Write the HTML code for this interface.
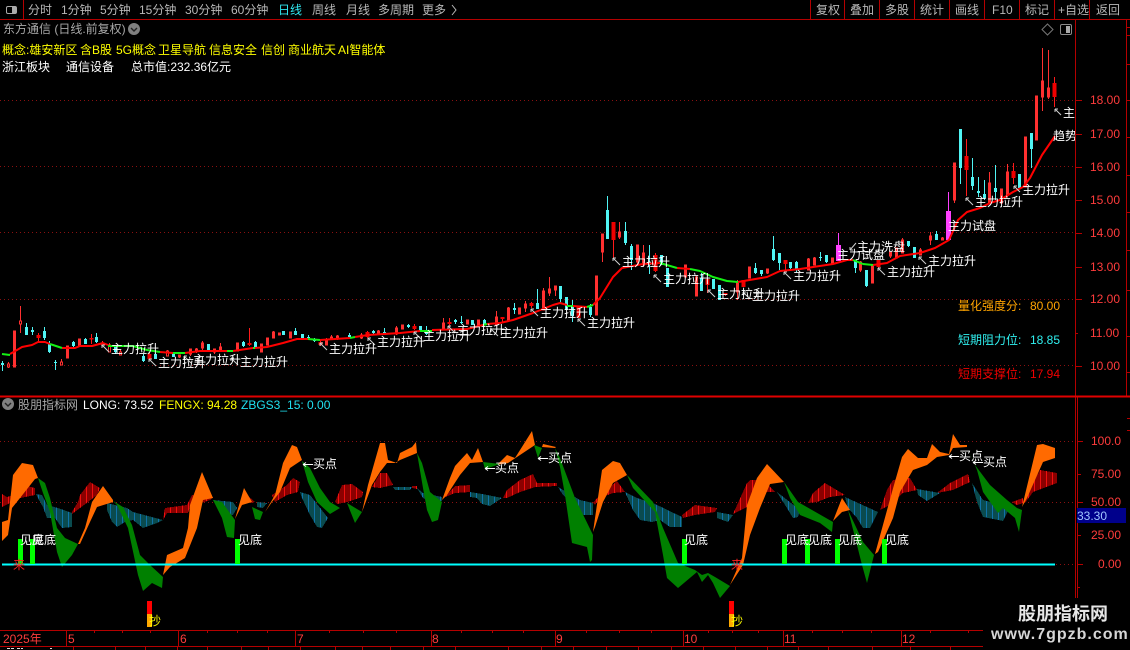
<!DOCTYPE html>
<html><head><meta charset="utf-8"><title>东方通信</title>
<style>
html,body{margin:0;padding:0;background:#000;width:1130px;height:650px;overflow:hidden}
svg{display:block}
text{font-family:"Liberation Sans","WenQuanYi Zen Hei","Noto Sans CJK SC",sans-serif;font-size:12px}
.g{fill:#b8b8b8}.ax{fill:#ff3c3c}.w{fill:#fff}.y{fill:#ffff00}
</style></head><body>
<svg width="1130" height="650" viewBox="0 0 1130 650" xmlns="http://www.w3.org/2000/svg">
<defs>
<pattern id="pr" width="6" height="10" patternUnits="userSpaceOnUse"><rect width="6" height="10" fill="#8b0000"/><rect x="2" width="1" height="10" fill="#ee1010"/></pattern>
<pattern id="pt" width="6" height="10" patternUnits="userSpaceOnUse"><rect width="6" height="10" fill="#0a4b4f"/><rect x="2" width="1" height="10" fill="#0f72a8"/></pattern>
<clipPath id="cl"><rect x="0" y="20" width="1075" height="376"/></clipPath>
</defs>
<rect width="1130" height="650" fill="#000"/>

<!-- main grid -->
<path d="M0 100.5H1075M0 166.5H1075M0 232.5H1075M0 299.5H1075M0 365.5H1075M0 441.5H1075M0 502.5H1075M1056 564.5H1075" stroke="#8a1010" stroke-width="1" stroke-dasharray="1 3" fill="none"/>

<!-- frame -->
<g stroke="#b40000" stroke-width="1" fill="none" shape-rendering="crispEdges">
<path d="M0 19.5H1130M23.5 0V19M810.5 0V19M844.5 0V19M879.5 0V19M914.5 0V19M949.5 0V19M984.5 0V19M1019.5 0V19M1054.5 0V19M1089.5 0V19"/>
<path d="M1075.5 19V650M1077.5 397V598M1126.5 19V396"/>
<path d="M0 630.5H1075M0 646.5H1075"/>
<path d="M66.5 630V646M178.5 630V646M295.5 630V646M431.5 630V646M555.5 630V646M683.5 630V646M783.5 630V646M901.5 630V646"/>
<path d="M94.5 630v3M122.5 630v3M150.5 630v3M207.5 630v3M237.5 630v3M267.5 630v3M329.5 630v3M363.5 630v3M396.5 630v3M461.5 630v3M492.5 630v3M523.5 630v3M586.5 630v3M619.5 630v3M651.5 630v3M708.5 630v3M732.5 630v3M758.5 630v3M812.5 630v3M842.5 630v3M871.5 630v3M930.5 630v3M968.5 630v3"/>
<path d="M73.5 646v4M115.5 646v4M145.5 646v4M177.5 646v4M207.5 646v4M241.5 646v4M268.5 646v4M300.5 646v4M335.5 646v4M362.5 646v4M390.5 646v4M423.5 646v4M455.5 646v4M508.5 646v4M541.5 646v4M573.5 646v4M606.5 646v4M638.5 646v4M671.5 646v4M703.5 646v4M735.5 646v4M767.5 646v4M798.5 646v4M828.5 646v4M872.5 646v4M910.5 646v4M950.5 646v4"/>
<path d="M1075 100.5h7M1075 134.5h7M1075 167.5h7M1075 200.5h7M1075 233.5h7M1075 267.5h7M1075 299.5h7M1075 333.5h3M1075 366.5h7M1077 441.5h6M1077 474.5h4M1077 502.5h6M1077 535.5h4M1077 564.5h6M1077 587.5h3"/>
<path d="M1126 27.5h4M1126 35.5h4M1126 64.5h4M1126 100.5h4M1126 137.5h4M1126 175.5h4M1126 212.5h4M1126 250.5h4M1126 290.5h4M1126 336.5h4M1126 372.5h4M1127 418.5h3M1127 430.5h3"/>
</g>
<path d="M0 396.5H1130" stroke="#e00000" stroke-width="2" shape-rendering="crispEdges"/>
<path d="M7 648.5h3M11 648.5h3M17 648.5h3M21 648.5h2M50 648.5h2" stroke="#ddd" shape-rendering="crispEdges"/>

<!-- candles: hollow red -->
<g shape-rendering="crispEdges" fill="none">
<path stroke="#ff3030" stroke-width="1" d="M8.5 362V364M8.5 367V368M7.5 364h2v3h-2zM14.5 331V367M13.5 331h2v36h-2zM20.5 306V321M20.5 324V333M19.5 321h2v3h-2zM61.5 359V362M60.5 362h2v3h-2zM67.5 346V358M66.5 346h2v12h-2zM79.5 339V346M78.5 339h2v7h-2zM102.5 341V343M101.5 343h2v2h-2zM109.5 343V345M108.5 345h2v7h-2zM120.5 350V352M119.5 352h2v3h-2zM167.5 350V351M166.5 351h2v5h-2zM179.5 355V358M178.5 355h2v2h-2zM190.5 349V356M189.5 349h2v5h-2zM196.5 348V353M195.5 349h2v2h-2zM202.5 341V350M201.5 343h2v5h-2zM214.5 349V354M213.5 349h2v3h-2zM220.5 343V352M219.5 347h2v3h-2zM237.5 343V351M236.5 343h2v8h-2zM261.5 344V352M260.5 344h2v8h-2zM267.5 338V345M266.5 338h2v7h-2zM273.5 331V338M272.5 332h2v6h-2zM279.5 333V335M278.5 333h2v2h-2zM290.5 332V338M289.5 332h2v6h-2zM326.5 338V345M325.5 340h2v5h-2zM331.5 335V340M330.5 337h2v2h-2zM337.5 335V340M336.5 336h2v2h-2zM361.5 333V339M360.5 335h2v3h-2zM378.5 330V335M377.5 331h2v3h-2zM396.5 326V335M395.5 328h2v6h-2zM402.5 325V329M401.5 325h2v4h-2zM443.5 318V330M442.5 323h2v7h-2zM467.5 320V324M466.5 320h2v4h-2zM478.5 320V325M477.5 320h2v5h-2zM496.5 311V325M495.5 317h2v8h-2zM508.5 307V322M507.5 308h2v13h-2zM519.5 308V314M518.5 308h2v6h-2zM525.5 301V312M524.5 304h2v4h-2zM543.5 288V310M542.5 291h2v19h-2zM549.5 277V296M548.5 289h2v4h-2zM555.5 286V296M554.5 286h2v4h-2zM596.5 276V315M595.5 276h2v39h-2zM602.5 234V262M601.5 234h2v18h-2zM619.5 222V239M618.5 232h2v5h-2zM643.5 245V265M642.5 253h2v12h-2zM637.5 245V265M636.5 245h2v17h-2zM685.5 265V277M684.5 265h2v12h-2zM696.5 276V296M695.5 277h2v19h-2zM737.5 280V300M736.5 283h2v9h-2zM749.5 267V278M748.5 267h2v11h-2zM767.5 269V274M766.5 269h2v4h-2zM808.5 258V270M807.5 259h2v11h-2zM814.5 257V265M813.5 258h2v7h-2zM872.5 266V283M871.5 266h2v17h-2zM832.5 258V264M831.5 258h2v6h-2zM860.5 261V272M859.5 262h2v8h-2zM890.5 252V258M889.5 252h2v4h-2zM896.5 248V258M895.5 248h2v10h-2zM902.5 238V253M901.5 240h2v13h-2zM920.5 248V255M919.5 250h2v5h-2zM930.5 232V245M929.5 236h2v4h-2zM942.5 237V240M941.5 238h2v2h-2zM954.5 163V203M953.5 163h2v37h-2zM989.5 172V203M988.5 183h2v20h-2zM1001.5 189V203M1000.5 189h2v14h-2zM1007.5 164V197M1006.5 172h2v23h-2zM1025.5 137V187M1024.5 137h2v50h-2zM1036.5 96V140M1035.5 96h2v44h-2zM1042.5 48V111M1041.5 81h2v16h-2zM1048.5 50V99M1047.5 88h2v9h-2z"/>
<!-- solid red -->
<path stroke="#ff1a1a" stroke-width="1" d="M38.5 333V342M91.5 334V344M149.5 353V359M320.5 340V346M367.5 331V338M414.5 324V330M449.5 318V327M502.5 317V322M531.5 302V308M578.5 306V318M613.5 222V258M655.5 253V272M707.5 278V293M725.5 293V296M743.5 280V287M785.5 260V271M878.5 260V268M249.5 328V346M966.5 139V196M1013.5 163V184M1054.5 77V107"/>
<path stroke="#f00000" stroke-width="4" d="M38.5 335V338M91.5 338V339.5M149.5 354V359M320.5 342V345M367.5 332V337M414.5 326V329M449.5 322V324M502.5 317V319M531.5 303V306M578.5 306V318M613.5 222V240M655.5 255V271M707.5 279V285M725.5 293V295M743.5 280V287M785.5 260V264M878.5 260V267M249.5 343V345M966.5 156V170M1013.5 171V178M1054.5 83V97"/>
<!-- cyan -->
<path stroke="#50f4f4" stroke-width="1" d="M2.5 361V371M26.5 323V335M32.5 327V335M44.5 327V340M49.5 341V353M55.5 360V370M73.5 341V347M85.5 338V344M96.5 333V343M115.5 345V354M143.5 354V362M155.5 353V359M173.5 353V357M208.5 344V350M243.5 341V347M255.5 341V348M283.5 331V335M295.5 328V335M302.5 334V339M308.5 335V340M314.5 338V342M349.5 333V338M373.5 330V334M384.5 328V334M408.5 324V328M420.5 326V332M426.5 326V335M455.5 319V324M461.5 316V324M472.5 320V325M484.5 319V324M514.5 303V314M537.5 289V309M560.5 286V303M566.5 297V310M572.5 300V322M590.5 304V317M607.5 196V239M625.5 222V245M631.5 244V270M649.5 245V274M661.5 255V265M667.5 268V287M701.5 273V291M713.5 279V289M719.5 285V300M755.5 263V274M761.5 270V276M773.5 236V261M779.5 253V270M790.5 262V270M796.5 261V272M820.5 252V261M826.5 255V263M855.5 260V273M866.5 270V287M908.5 241V247M914.5 247V258M936.5 231V240M960.5 129V184M972.5 158V190M978.5 177V197M984.5 180V200M995.5 165V200M1019.5 174V188M1031.5 133V168"/>
<path stroke="#50f4f4" stroke-width="3" d="M2.5 363V365M26.5 327V335M32.5 330V332M44.5 331V338M49.5 344V352M55.5 362V363M73.5 342V346M85.5 339V344M96.5 337V342M115.5 347V352M143.5 356V361M155.5 354V359M173.5 353V357M208.5 344V350M243.5 342V346M255.5 342V347M283.5 331V335M295.5 331V335M302.5 334V339M308.5 337V338M314.5 339V341M349.5 335V337M373.5 331V333M384.5 332V333M408.5 325V327M420.5 326V331M426.5 331V334M455.5 320V322M461.5 322V323M472.5 320V325M484.5 320V324M514.5 308V310M537.5 303V309M560.5 286V299M566.5 297V310M572.5 306V316M590.5 307V315M607.5 210V239M625.5 231V243M631.5 246V260M649.5 262V265M661.5 255V265M667.5 268V287M701.5 278V291M713.5 279V289M719.5 285V300M755.5 268V273M761.5 270V274M773.5 249V260M779.5 253V263M790.5 262V268M796.5 262V270M820.5 257V258M826.5 255V262M855.5 260V268M866.5 270V286M908.5 241V246M914.5 247V258M936.5 234V240M960.5 129V168M972.5 177V186M978.5 191V193M984.5 194V198M995.5 188V192M1019.5 174V188M1031.5 133V149"/>
<!-- magenta -->
<path stroke="#ff40ff" stroke-width="1" d="M838.5 233V245M948.5 192V211"/>
<path stroke="#ff40ff" stroke-width="5" d="M838.5 245V261M948.5 211V240"/>
</g>

<!-- MA line -->
<g fill="none" stroke-width="2" stroke-linejoin="round">
<path stroke="#ff0000" d="M10 354L17 350L22 347L32 345L38 342L45 342L50 344M62 348L75 348L80 346L92 346L103 343L108 345M160 352L173 353M185 353L200 351L227 351M233 351L253 348M255 348L267 347L283 343L297 339L308 339M320 340L350 338M355 337L368 335L400 333L420 331M432 330L467 329L483 325M487 324L500 323L513 320L533 313L553 305L560 303L567 305M573 306L587 307M593 305L600 298L613 277L622 268L643 264L660 263M677 268L690 269M738 282L767 277L780 271L800 269L833 264L847 260L853 260M873 265L887 263L900 256L920 253L935 248L949 240L958 220L967 212L980 208L990 203L1000 200L1013 192L1023 187L1030 178L1042 155L1055 136"/>
<path stroke="#14f014" d="M2 354L10 355M50 344L62 348M108 346L133 346L147 350L160 352M173 353L185 353M227 351L233 351M253 348L255 348M308 339L320 340M350 338L355 337M420 331L432 331M483 325L487 324M567 306L573 306M587 307L593 305M660 263L677 268M690 269L700 271L713 277L727 281L738 282M853 260L863 264L873 265"/>
</g>

<!-- bars lower -->
<g stroke="none" shape-rendering="crispEdges">
<path fill="url(#pr)" d="M2 494L7 497L13 495L20 488L27 486L35 488L35 495L20 498L12 502L2 507ZM72 512L78 502L80 495L90 482L100 488L97 495L88 502L80 508L72 514ZM163 520L165 508L187 505L192 495L213 497L210 500L190 507L188 513L167 513ZM247 495L255 502L250 503ZM272 495L287 485L293 478L300 482L298 492L287 495L275 502ZM335 502L342 485L352 484L363 492L362 497L347 502L337 504ZM372 487L380 473L387 473L393 485L380 488ZM412 486L417 486L417 489L412 488ZM443 498L455 486L470 485L470 492L455 493ZM503 498L507 490L520 480L533 474L537 483L557 483L557 486L535 487L520 492L507 498ZM593 503L597 498L617 481L625 492L613 493L600 498L595 505ZM682 515L695 505L717 508L715 512L695 515L683 518ZM733 514L747 483L750 480L763 480L775 492L763 492L747 507ZM808 503L813 493L825 483L845 495L830 497L817 502ZM880 510L887 490L893 480L910 478L917 490L903 493L890 505ZM937 493L950 483L968 474L970 482L953 490ZM1012 502L1023 498L1023 503L1017 505ZM1023 502L1040 470L1057 473L1057 483L1033 492L1025 503Z"/>
<path fill="url(#pt)" d="M36 494L42 495L47 505L58 508L72 513L72 527L62 528L55 518L47 518L43 507L38 498ZM107 503L127 508L133 512L163 520L157 523L143 528L133 520L125 522L117 527L112 522L107 510ZM213 500L233 502L237 508L233 515L227 515ZM257 502L267 503L263 508L257 507ZM300 492L310 495L328 518L322 528L317 527L310 515L302 498ZM393 487L412 487L410 490L395 490ZM417 488L423 493L442 497L442 501L430 501L423 498ZM470 492L482 494L502 498L490 506L482 504L477 498L470 497ZM558 487L580 500L593 503L593 515L582 515L577 508L563 495ZM625 492L637 498L653 503L682 517L682 527L670 527L660 520L652 522L640 520L633 510ZM717 512L733 515L728 522L717 518ZM777 492L800 510L798 517L793 518L787 508L780 497ZM845 497L878 512L870 528L863 528L857 518L848 508ZM917 489L940 493L927 501L918 495ZM972 483L983 500L1010 507L1003 521L983 517L977 502Z"/>
</g>

<!-- orange & green bands -->
<g stroke="none">
<path fill="#ff6a00" d="M2 522L8 520L13 475L22 463L33 465L38 478L35 479L20 498L12 508L8 535L2 541ZM78 544L85 528L92 502L103 486L113 500L113 502L97 507L90 522L80 544ZM163 575L167 555L183 548L188 528L190 505L202 472L213 498L203 500L197 528L185 558L170 567ZM235 519L244 488L252 502L242 505ZM265 512L275 495L283 463L292 445L297 447L302 460L290 468L280 492L272 502ZM362 512L368 485L380 443L385 443L388 460L397 463L400 453L412 447L416 442L417 453L400 460L395 463L387 463L380 472L372 485ZM442 500L450 478L455 466L467 453L472 460L478 448L483 462L470 463L460 475L447 495ZM497 465L507 455L515 458L532 431L535 445L520 455L508 463ZM542 447L543 444L556 447L555 448ZM593 532L602 470L613 461L620 463L627 475L613 483L603 502L595 527ZM730 585L742 558L747 505L757 478L767 464L784 482L770 484L760 508L750 535L743 565ZM833 521L842 498L850 510L842 512ZM875 554L892 492L902 457L908 449L918 458L927 458L932 444L940 452L949 454L953 434L960 445L967 445L967 447L953 448L949 455L937 457L927 465L913 470L900 492L893 518L878 552ZM1022 507L1037 445L1043 444L1055 448L1055 458L1043 462L1027 498Z"/>
<path fill="#008000" d="M38 478L45 483L50 498L57 528L65 538L78 544L72 555L62 567L57 552L50 512L43 493ZM113 501L123 507L132 525L140 555L150 565L163 577L162 588L152 583L143 591L138 575L128 528L117 505ZM213 500L222 502L235 520L234 538L227 537L222 518ZM252 507L263 512L260 520L255 519ZM302 461L310 468L320 488L330 502L340 508L330 514L317 502L308 482ZM347 503L362 512L355 523ZM417 453L422 463L430 492L442 502L438 520L432 522L427 510L423 488ZM483 462L500 464L485 469ZM534 445L542 448L538 458ZM555 448L560 458L575 498L593 535L592 560L590 562L587 547L572 543L565 495L560 467ZM627 475L653 502L663 528L678 563L695 570L702 575L708 573L715 577L730 586L720 598L713 583L708 575L702 582L697 572L678 588L667 578L663 555L655 512L633 488ZM784 482L798 502L833 522L832 532L820 523L800 515L790 498ZM848 510L863 542L874 555L867 583L862 565L857 545ZM967 447L975 465L990 485L1007 500L1017 508L1022 510L1019 532L1015 518L1003 508L998 513L983 492L977 470Z"/>
</g>
<path d="M2 564.5H1055" stroke="#00ffff" stroke-width="2" shape-rendering="crispEdges"/>

<!-- green signal bars -->
<path d="M20.5 539V564M32.5 539V564M237.5 539V564M684.5 539V564M784.5 539V564M807.5 539V564M837.5 539V564M884.5 539V564" stroke="#00ff00" stroke-width="5" shape-rendering="crispEdges"/>
<!-- 抄 bars -->
<path d="M149.5 601V614M731.5 601V614" stroke="#ff0000" stroke-width="5" shape-rendering="crispEdges"/>
<path d="M149.5 614V627M731.5 614V627" stroke="#ffa800" stroke-width="5" shape-rendering="crispEdges"/>

<!-- lower labels -->
<g class="w">
<text x="20" y="544" class="w">见底</text><text x="32" y="544" class="w">见底</text><text x="238" y="544" class="w">见底</text><text x="684" y="544" class="w">见底</text><text x="785" y="544" class="w">见底</text><text x="808" y="544" class="w">见底</text><text x="838" y="544" class="w">见底</text><text x="885" y="544" class="w">见底</text>
<text x="313" y="468" class="w">买点</text><text x="495" y="472" class="w">买点</text><text x="548" y="462" class="w">买点</text><text x="959" y="460" class="w">买点</text><text x="983" y="466" class="w">买点</text>
</g>
<path d="M303 464.5h10M303 464.5l3-2M303 464.5l3 2M485 468.5h10M485 468.5l3-2M485 468.5l3 2M538 458.5h10M538 458.5l3-2M538 458.5l3 2M949 456.5h10M949 456.5l3-2M949 456.5l3 2M973 462.5h10M973 462.5l3-2M973 462.5l3 2" stroke="#fff" fill="none"/>
<text x="13" y="569" style="fill:#ff2020">来</text><text x="731" y="569" style="fill:#ff2020">来</text>
<text x="149" y="625" class="y">抄</text><text x="731" y="625" class="y">抄</text>

<!-- main labels -->
<g clip-path="url(#cl)">
<path d="M102 345l7 7M102 345h3M102 345v3M149 359l7 7M149 359h3M149 359v3M184 356l7 7M184 356h3M184 356v3M231 358l7 7M231 358h3M231 358v3M320 343l7 7M320 343h3M320 343v3M368 338l7 7M368 338h3M368 338v3M414 332l7 7M414 332h3M414 332v3M448 326l7 7M448 326h3M448 326v3M491 329l7 7M491 329h3M491 329v3M531 309l7 7M531 309h3M531 309v3M578 319l7 7M578 319h3M578 319v3M613 258l7 7M613 258h3M613 258v3M654 275l7 7M654 275h3M654 275v3M708 290l7 7M708 290h3M708 290v3M743 292l7 7M743 292h3M743 292v3M784 272l7 7M784 272h3M784 272v3M878 268l7 7M878 268h3M878 268v3M919 257l7 7M919 257h3M919 257v3M966 198l7 7M966 198h3M966 198v3M1014 186l6 6M1014 186h3M1014 186v3M1055 109l6 6M1055 109h3M1055 109v3M850 250l6-7M850 250h3M850 250v-3" stroke="#cfcfcf" fill="none"/>
<text x="111" y="353" class="w">主力拉升</text><text x="158" y="367" class="w">主力拉升</text><text x="193" y="364" class="w">主力拉升</text><text x="240" y="366" class="w">主力拉升</text><text x="329" y="353" class="w">主力拉升</text><text x="377" y="346" class="w">主力拉升</text><text x="423" y="340" class="w">主力拉升</text><text x="457" y="334" class="w">主力拉升</text><text x="500" y="337" class="w">主力拉升</text><text x="540" y="317" class="w">主力拉升</text><text x="587" y="327" class="w">主力拉升</text><text x="622" y="266" class="w">主力拉升</text><text x="663" y="283" class="w">主力拉升</text><text x="717" y="298" class="w">主力拉升</text><text x="752" y="300" class="w">主力拉升</text><text x="793" y="280" class="w">主力拉升</text><text x="887" y="276" class="w">主力拉升</text><text x="928" y="265" class="w">主力拉升</text><text x="975" y="206" class="w">主力拉升</text><text x="1022" y="194" class="w">主力拉升</text>
<text x="857" y="251" class="w">主力洗盘</text><text x="837" y="259" class="w">主力试盘</text><text x="948" y="230" class="w">主力试盘</text>
<text x="1063" y="117" class="w">主</text><text x="1053" y="140" class="w">趋势</text>
</g>

<!-- right side info -->
<text x="958" y="310" style="fill:#ffa500">量化强度分:</text><text x="1030" y="310" style="fill:#ffa500">80.00</text>
<text x="958" y="344" style="fill:#30f0f0">短期阻力位:</text><text x="1030" y="344" style="fill:#30f0f0">18.85</text>
<text x="958" y="378" style="fill:#f00000">短期支撑位:</text><text x="1030" y="378" style="fill:#f00000">17.94</text>

<!-- axis labels -->
<g class="ax">
<text x="1090" y="104" class="ax">18.00</text><text x="1090" y="138" class="ax">17.00</text><text x="1090" y="171" class="ax">16.00</text><text x="1090" y="204" class="ax">15.00</text><text x="1090" y="237" class="ax">14.00</text><text x="1090" y="271" class="ax">13.00</text><text x="1090" y="303" class="ax">12.00</text><text x="1090" y="337" class="ax">11.00</text><text x="1090" y="370" class="ax">10.00</text>
<text x="1091" y="445" class="ax">100.0</text><text x="1091" y="478" class="ax">75.00</text><text x="1091" y="506" class="ax">50.00</text><text x="1091" y="539" class="ax">25.00</text><text x="1098" y="568" class="ax">0.00</text>
</g>
<rect x="1077" y="508" width="49" height="15" fill="#00008b"/>
<text x="1077" y="520" style="fill:#9fc4ff">33.30</text>

<!-- x-axis dates -->
<text x="3" y="643" class="ax">2025年</text><text x="68" y="643" class="ax">5</text><text x="180" y="643" class="ax">6</text><text x="297" y="643" class="ax">7</text><text x="432" y="643" class="ax">8</text><text x="556" y="643" class="ax">9</text><text x="684" y="643" class="ax">10</text><text x="784" y="643" class="ax">11</text><text x="902" y="643" class="ax">12</text>

<!-- top toolbar -->
<rect x="6.5" y="6.5" width="10" height="7" rx="1.5" fill="none" stroke="#aaa"/><rect x="12" y="7" width="4" height="6" fill="#aaa"/>
<g class="g">
<text x="28" y="14" class="g">分时</text><text x="61" y="14" class="g">1分钟</text><text x="100" y="14" class="g">5分钟</text><text x="139" y="14" class="g">15分钟</text><text x="185" y="14" class="g">30分钟</text><text x="231" y="14" class="g">60分钟</text>
<text x="278" y="14" style="fill:#30e8f0">日线</text>
<text x="312" y="14" class="g">周线</text><text x="346" y="14" class="g">月线</text><text x="378" y="14" class="g">多周期</text><text x="422" y="14" class="g">更多</text>
<text x="816" y="14" class="g">复权</text><text x="850" y="14" class="g">叠加</text><text x="885" y="14" class="g">多股</text><text x="920" y="14" class="g">统计</text><text x="955" y="14" class="g">画线</text><text x="992" y="14" class="g">F10</text><text x="1025" y="14" class="g">标记</text><text x="1058" y="14" class="g">+自选</text><text x="1096" y="14" class="g">返回</text>
</g>
<path d="M452 5l4 5-4 5" stroke="#b8b8b8" fill="none"/>

<!-- title rows -->
<text x="3" y="33" style="fill:#a8a8a8">东方通信 (日线.前复权)</text>
<circle cx="134" cy="29" r="6" fill="#808080"/><path d="M131 28l3 3 3-3" stroke="#222" fill="none" stroke-width="1.4"/>
<text x="2" y="54" class="y">概念:雄安新区</text><text x="80" y="54" class="y">含B股</text><text x="116" y="54" class="y">5G概念</text><text x="158" y="54" class="y">卫星导航</text><text x="209" y="54" class="y">信息安全</text><text x="261" y="54" class="y">信创</text><text x="288" y="54" class="y">商业航天</text><text x="338" y="54" class="y">AI智能体</text>
<text x="2" y="71" class="w">浙江板块</text><text x="66" y="71" class="w">通信设备</text><text x="131" y="71" class="w">总市值:232.36亿元</text>
<path d="M1047.5 24l5.5 5.5-5.5 5.5-5.5-5.5z" stroke="#777" fill="none"/>
<rect x="1060.5" y="24.5" width="11" height="10" rx="1.5" fill="none" stroke="#8a8a8a"/><rect x="1066" y="26" width="4" height="7" fill="#aaa"/>

<!-- lower pane title -->
<circle cx="8" cy="404" r="6" fill="#808080"/><path d="M5 403l3 3 3-3" stroke="#222" fill="none" stroke-width="1.4"/>
<text x="18" y="409" style="fill:#a8a8a8">股朋指标网</text>
<text x="83" y="409" class="w">LONG: 73.52</text>
<text x="159" y="409" class="y">FENGX: 94.28</text>
<text x="241" y="409" style="fill:#20e0f0">ZBGS3_15: 0.00</text>

<!-- watermark -->
<rect x="983" y="598" width="147" height="52" fill="#000"/>
<text x="1018" y="620" style="font-size:18px;font-weight:bold;fill:#e6e6e6">股朋指标网</text>
<text x="991" y="639" style="font-size:16px;font-weight:bold;fill:#d6d6d6;letter-spacing:1px">www.7gpzb.com</text>
</svg>
</body></html>
